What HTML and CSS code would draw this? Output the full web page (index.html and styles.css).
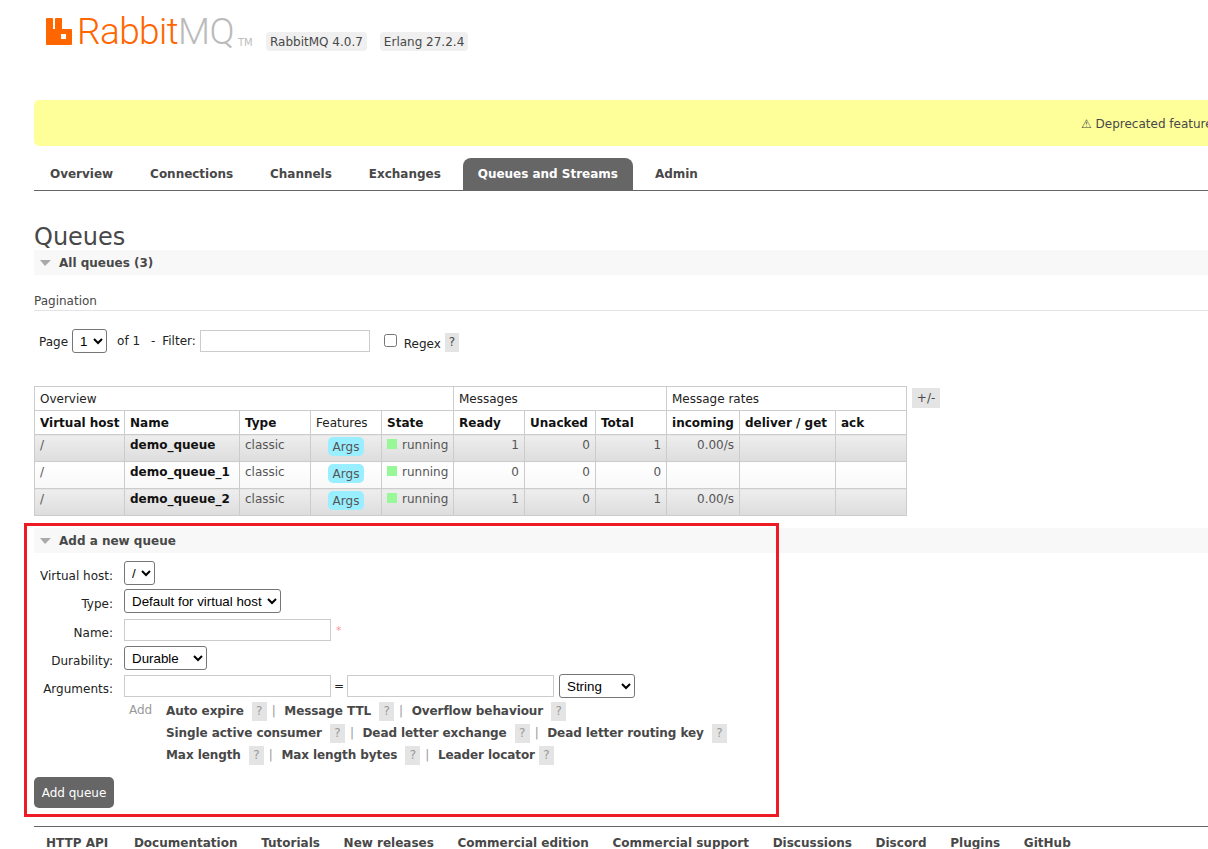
FILE: index.html
```html
<html>

<head>
    <link rel="stylesheet" href="styles.css">
</head>

<body>
<div class="page">
    <div class="header">
        <div class="logo">
            <svg class="logo-mark" width="27" height="27" viewBox="0 0 27 27">
                <path fill-rule="evenodd" fill="#f60" d="M0 1a1 1 0 0 1 1-1h5a1 1 0 0 1 1 1v10h2V1a1 1 0 0 1 1-1h5a1 1 0 0 1 1 1v10h9a1 1 0 0 1 1 1v14a1 1 0 0 1-1 1H1a1 1 0 0 1-1-1zM15 16v5h5v-5z"/>
            </svg>
            <span class="logo-rabbit">Rabbit</span><span class="logo-mq">MQ</span><span class="logo-tm">TM</span>
        </div>
        <span class="version first">RabbitMQ 4.0.7</span>
        <span class="version">Erlang 27.2.4</span>
    </div>

    <div class="banner">⚠ Deprecated feature</div>

    <ul class="tabs">
        <li>Overview</li>
        <li>Connections</li>
        <li>Channels</li>
        <li>Exchanges</li>
        <li class="active">Queues and Streams</li>
        <li>Admin</li>
    </ul>

    <h1>Queues</h1>
    <h2 class="section"><span class="arrow"></span>All queues (3)</h2>

    <h3 class="pagination-title">Pagination</h3>
    <div class="pagination">
        <label class="page-label">Page</label>
        <select class="select-page"><option>1</option></select>
        <span class="of">of 1</span>
        <span class="filter">- Filter:</span>
        <input type="text" class="filter-input">
        <input type="checkbox" class="regex-check">
        <label class="regex-label">Regex</label>
        <span class="help help-regex">?</span>
    </div>

    <div class="table-wrap">
        <table class="list">
            <colgroup>
                <col class="c-vhost">
                <col class="c-name">
                <col class="c-type">
                <col class="c-features">
                <col class="c-state">
                <col class="c-ready">
                <col class="c-unacked">
                <col class="c-total">
                <col class="c-incoming">
                <col class="c-deliver">
                <col class="c-ack">
            </colgroup>
            <thead>
            <tr class="group">
                <th colspan="5">Overview</th>
                <th colspan="3">Messages</th>
                <th colspan="3">Message rates</th>
            </tr>
            <tr>
                <th class="strong">Virtual host</th>
                <th class="strong">Name</th>
                <th class="strong">Type</th>
                <th>Features</th>
                <th class="strong">State</th>
                <th class="strong">Ready</th>
                <th class="strong">Unacked</th>
                <th class="strong">Total</th>
                <th class="strong">incoming</th>
                <th class="strong">deliver / get</th>
                <th class="strong">ack</th>
            </tr>
            </thead>
            <tbody>
            <tr class="alt1">
                <td>/</td>
                <td class="name">demo_queue</td>
                <td>classic</td>
                <td class="center"><span class="pill">Args</span></td>
                <td><span class="status"></span>running</td>
                <td class="num">1</td>
                <td class="num">0</td>
                <td class="num">1</td>
                <td class="num">0.00/s</td>
                <td></td>
                <td></td>
            </tr>
            <tr class="alt2">
                <td>/</td>
                <td class="name">demo_queue_1</td>
                <td>classic</td>
                <td class="center"><span class="pill">Args</span></td>
                <td><span class="status"></span>running</td>
                <td class="num">0</td>
                <td class="num">0</td>
                <td class="num">0</td>
                <td></td>
                <td></td>
                <td></td>
            </tr>
            <tr class="alt1">
                <td>/</td>
                <td class="name">demo_queue_2</td>
                <td>classic</td>
                <td class="center"><span class="pill">Args</span></td>
                <td><span class="status"></span>running</td>
                <td class="num">1</td>
                <td class="num">0</td>
                <td class="num">1</td>
                <td class="num">0.00/s</td>
                <td></td>
                <td></td>
            </tr>
            </tbody>
        </table>
        <span class="plus-minus">+/-</span>
    </div>

    <h2 class="section section-add"><span class="arrow"></span>Add a new queue</h2>

    <form class="queue-form">
        <div class="row row-vhost">
            <label>Virtual host:</label>
            <select class="select-vhost"><option>/</option></select>
        </div>
        <div class="row row-type">
            <label>Type:</label>
            <select class="select-type"><option>Default for virtual host</option></select>
        </div>
        <div class="row row-name">
            <label>Name:</label>
            <input type="text" class="text-input">
            <span class="required">*</span>
        </div>
        <div class="row row-durability">
            <label>Durability:</label>
            <select class="select-durable"><option>Durable</option></select>
        </div>
        <div class="row row-args">
            <label>Arguments:</label>
            <input type="text" class="text-input">
            <span class="equals">=</span>
            <input type="text" class="text-input">
            <select class="select-string"><option>String</option></select>
        </div>
        <div class="arg-help">
            <span class="add-label">Add</span>
            <div class="arg-lines">
                <div class="arg-line">
                    <b>Auto expire</b><span class="help">?</span><span class="sep">|</span>
                    <b>Message TTL</b><span class="help">?</span><span class="sep">|</span>
                    <b>Overflow behaviour</b><span class="help">?</span>
                </div>
                <div class="arg-line">
                    <b>Single active consumer</b><span class="help">?</span><span class="sep">|</span>
                    <b>Dead letter exchange</b><span class="help">?</span><span class="sep">|</span>
                    <b>Dead letter routing key</b><span class="help">?</span>
                </div>
                <div class="arg-line">
                    <b>Max length</b><span class="help">?</span><span class="sep">|</span>
                    <b>Max length bytes</b><span class="help">?</span><span class="sep">|</span>
                    <b>Leader locator</b><span class="help help-tight">?</span>
                </div>
            </div>
        </div>
        <button type="button" class="add-button">Add queue</button>
    </form>

    <ul class="footer">
        <li class="first-link">HTTP API</li>
        <li>Documentation</li>
        <li>Tutorials</li>
        <li>New releases</li>
        <li>Commercial edition</li>
        <li>Commercial support</li>
        <li>Discussions</li>
        <li>Discord</li>
        <li>Plugins</li>
        <li>GitHub</li>
    </ul>
</div>

<div class="highlight"></div>
</body>

</html>
```

FILE: styles.css
```css
html,
body {
    margin: 0;
    padding: 0;
    height: 100%;
    overflow: hidden;
    background-color: #fff;
}

body {
    font-family: "DejaVu Sans", Verdana, sans-serif;
    font-size: 12px;
    color: #484848;
}

.page {
    width: 1174px;
    margin-left: 34px;
}

/* header */
.header {
    display: flex;
    align-items: flex-start;
    height: 100px;
}

.logo {
    display: flex;
    align-items: flex-start;
    margin: 18px 0 0 12px;
    width: 220px;
    height: 40px;
}

.logo-mark {
    flex: none;
    margin-right: 4px;
}

.logo-rabbit,
.logo-mq {
    font-family: Roboto, "Open Sans", sans-serif;
    font-weight: 300;
    font-size: 37px;
    line-height: 27px;
    letter-spacing: -0.6px;
    color: #f60;
}

.logo-mq {
    color: #bbb;
}

.logo-tm {
    font-size: 10px;
    color: #bbb;
    margin: 19px 0 0 4px;
}

.version {
    margin-top: 32px;
    padding: 2px 4px;
    height: 15px;
    line-height: 16px;
    background-color: #f0f0f0;
    border-radius: 4px;
    margin-left: 13px;
    white-space: nowrap;
}

.version.first {
    margin-left: 0;
}

.banner {
    height: 46px;
    line-height: 48px;
    padding-left: 1047px;
    background-color: #ff9;
    border-radius: 5px 0 0 5px;
    white-space: nowrap;
    overflow: hidden;
}

/* tabs */
.tabs {
    display: flex;
    gap: 7px;
    list-style: none;
    margin: 12px 0 0;
    padding: 0 0 0 1px;
    border-bottom: 1px solid #666;
}

.tabs li {
    height: 32px;
    line-height: 33px;
    padding: 0 15px;
    font-weight: bold;
    letter-spacing: -0.02px;
    white-space: nowrap;
}

.tabs .active {
    background-color: #666;
    color: #fff;
    border-radius: 8px 8px 0 0;
}

h1 {
    font-size: 24px;
    font-weight: normal;
    line-height: 30px;
    margin: 31px 0 0;
}

.section {
    display: flex;
    align-items: center;
    height: 25px;
    margin: -2px 0 0;
    padding-left: 6px;
    background-color: #f8f8f8;
    font-size: 12px;
    font-weight: bold;
}

.arrow {
    width: 0;
    height: 0;
    margin-right: 8px;
    border-left: 5px solid transparent;
    border-right: 6px solid transparent;
    border-top: 6px solid #aaa;
}

.pagination-title {
    font-size: 12px;
    font-weight: normal;
    line-height: 16px;
    margin: 18px 0 0;
    padding-bottom: 1px;
    border-bottom: 1px solid #e4e4e4;
}

.pagination {
    display: flex;
    align-items: center;
    height: 24px;
    margin-top: 18px;
    color: #222;
}

.page-label {
    margin-left: 5px;
    margin-right: 4px;
    padding-top: 1px;
}

select {
    height: 24px;
    font-family: "Liberation Sans", Arial, sans-serif;
    font-size: 13.33px;
    color: #000;
    background-color: #fff;
    border: 1px solid #767676;
    border-radius: 3px;
    padding: 0 0 0 3px;
}

.select-page {
    width: 35px;
}

.of {
    margin-left: 10px;
    margin-top: -1px;
}

.filter {
    margin-left: 11px;
    margin-top: -1px;
    word-spacing: 3px;
}

.filter-input {
    width: 170px;
    height: 22px;
    box-sizing: border-box;
    margin: -1px 0 0 4px;
    border: 1px solid #ccc;
}

.regex-check {
    width: 13px;
    height: 13px;
    margin: -1px 0 0 14px;
}

.regex-label {
    margin-left: 7px;
    margin-top: 5px;
}

.help {
    display: inline-block;
    width: 15px;
    height: 19px;
    line-height: 19px;
    text-align: center;
    background-color: #e4e4e4;
    color: #999;
    margin-left: 8px;
}

.help-regex {
    width: 14px;
    margin-left: 4px;
    margin-top: 3px;
    color: #484848;
}

/* queues table */
.table-wrap {
    display: flex;
    align-items: flex-start;
    margin-top: 33px;
}

.list {
    border-collapse: collapse;
    table-layout: fixed;
    width: 872px;
    font-size: 12px;
    color: #484848;
}

.list th,
.list td {
    border: 1px solid #ccc;
    padding: 0 5px;
    box-sizing: border-box;
    text-align: left;
    white-space: nowrap;
}

.list th {
    height: 24px;
    font-weight: normal;
    color: #222;
}

.list th.strong {
    font-weight: bold;
    color: #111;
}

.list .center {
    text-align: center;
}

.c-vhost { width: 90px; }
.c-name { width: 115px; }
.c-type { width: 71px; }
.c-features { width: 71px; }
.c-state { width: 72px; }
.c-ready { width: 71px; }
.c-unacked { width: 71px; }
.c-total { width: 71px; }
.c-incoming { width: 73px; }
.c-deliver { width: 96px; }
.c-ack { width: 71px; }

.list td {
    height: 27px;
    vertical-align: top;
    padding-top: 3px;
    color: #555;
}

.list .alt1 td {
    background: linear-gradient(#eee, #ddd);
}

.list .alt2 td {
    background: linear-gradient(#fff, #f8f8f8);
}

.list td.name {
    font-weight: bold;
    color: #111;
}

.list td.num {
    text-align: right;
}

.pill {
    display: inline-block;
    height: 19px;
    line-height: 20px;
    margin-top: -1px;
    padding: 0 5px;
    background-color: #9ef;
    border-radius: 5px;
}

.status {
    display: inline-block;
    width: 10px;
    height: 10px;
    margin-right: 5px;
    background-color: #98f898;
}

.plus-minus {
    width: 28px;
    height: 20px;
    line-height: 20px;
    margin: 2px 0 0 5px;
    text-align: center;
    background-color: #e4e4e4;
    color: #484848;
}

.section-add {
    margin-top: 12px;
}

/* add queue form */
.queue-form {
    margin: 0;
}

.row {
    display: flex;
    align-items: center;
    color: #222;
}

.row label {
    width: 79px;
    margin-right: 11px;
    padding-top: 6px;
    text-align: right;
    flex: none;
}

.row-vhost { height: 24px; margin-top: 8px; }
.row-type { height: 24px; margin-top: 4px; }
.row-name { height: 22px; margin-top: 6px; }
.row-durability { height: 24px; margin-top: 5px; }
.row-args { height: 24px; margin-top: 4px; }

.select-vhost { width: 31px; }
.select-type { width: 157px; }
.select-durable { width: 83px; }

.select-string {
    width: 76px;
    margin-left: 5px;
}

.text-input {
    width: 207px;
    height: 22px;
    box-sizing: border-box;
    border: 1px solid #ccc;
    margin: 0;
}

.required {
    margin-left: 5px;
    color: #f99;
    font-size: 11px;
}

.equals {
    width: 16px;
    text-align: center;
}

.arg-help {
    display: flex;
    margin-top: 2px;
}

.add-label {
    margin-left: 95px;
    width: 37px;
    color: #999;
    line-height: 20px;
}

.arg-line {
    display: flex;
    align-items: center;
    height: 22px;
    white-space: nowrap;
}

.arg-line b {
    font-weight: bold;
    letter-spacing: -0.08px;
}

.sep {
    margin: 0 8.5px 0 5px;
    color: #999;
}

.help-tight {
    margin-left: 4px;
}

.add-button {
    display: block;
    width: 80px;
    height: 31px;
    margin: 11px 0 0;
    padding: 0;
    border: none;
    border-radius: 5px;
    background-color: #666;
    color: #fff;
    font-family: "DejaVu Sans", Verdana, sans-serif;
    font-size: 12px;
}

/* footer */
.footer {
    display: flex;
    gap: 23.7px;
    list-style: none;
    margin: 18px 0 0;
    padding: 9px 0 0 12px;
    border-top: 1px solid #666;
    font-weight: bold;
    white-space: nowrap;
}

.first-link {
    margin-right: 2px;
}

/* red box someone drew over the screenshot */
.highlight {
    position: absolute;
    left: 24px;
    top: 523px;
    width: 749px;
    height: 288px;
    border: 3px solid #ed1c24;
}
```
